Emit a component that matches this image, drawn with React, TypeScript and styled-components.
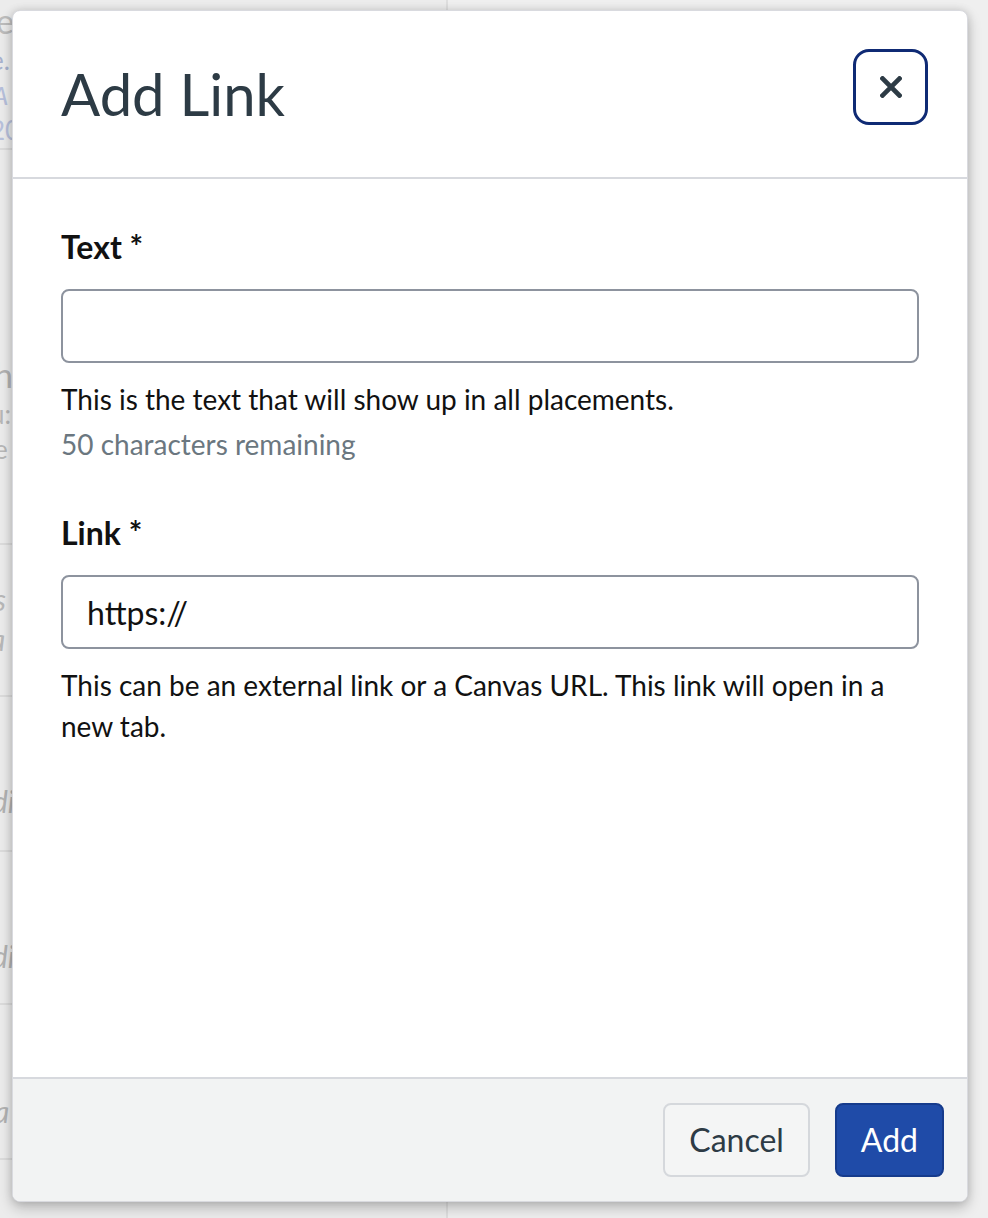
import React from "react";
import styled, { createGlobalStyle } from "styled-components";

const GlobalStyle = createGlobalStyle`
  html, body { margin: 0; padding: 0; }
  body { font-family: Lato, "Noto Sans", "Liberation Sans", sans-serif; background: #ececec; }
  *, *::before, *::after { box-sizing: border-box; }
`;

const Screen = styled.div`
  position: relative;
  width: 988px;
  height: 1218px;
  overflow: hidden;
  background: #ebebeb;
`;

/* ---------- faded page behind the modal ---------- */
const BackPage = styled.div`
  display: grid;
  grid-template-columns: 448px 1fr;
  height: 100%;
`;

const BackList = styled.div`
  display: flex;
  flex-direction: column;
  border-right: 2px solid #dedede;
  background: #ececec;
`;

const BackMain = styled.div`
  background: #efefef;
`;

const BackRow = styled.div<{ $h: number; $pad: number }>`
  height: ${(p) => p.$h}px;
  padding-top: ${(p) => p.$pad}px;
  border-bottom: 2px solid #dcdcdc;
  display: flex;
  flex-direction: column;
  gap: 4px;
  overflow: hidden;
`;

const Frag = styled.span<{ $c: string; $size: number; $italic?: boolean; $shift?: number }>`
  display: block;
  white-space: nowrap;
  margin-left: ${(p) => p.$shift ?? 0}px;
  font-size: ${(p) => p.$size}px;
  line-height: ${(p) => Math.round(p.$size * 1.2)}px;
  font-style: ${(p) => (p.$italic ? "italic" : "normal")};
  color: ${(p) => p.$c};
`;

/* ---------- modal ---------- */
const Dialog = styled.div`
  position: absolute;
  left: 12px;
  top: 10px;
  width: 956px;
  height: 1192px;
  display: flex;
  flex-direction: column;
  background: #ffffff;
  border: 1px solid #d9dadf;
  border-radius: 8px;
  box-shadow: 0 6px 14px rgba(0, 0, 0, 0.22), 0 0 8px rgba(0, 0, 0, 0.12);
  overflow: hidden;
`;

const Header = styled.header`
  position: relative;
  padding: 48px;
  border-bottom: 2px solid #d7d9de;
`;

const Title = styled.h2`
  margin: 0;
  font-size: 58px;
  line-height: 70px;
  font-weight: 400;
  color: #2d3b45;
`;

const CloseButton = styled.button`
  position: absolute;
  top: 38px;
  right: 39px;
  width: 75px;
  height: 76px;
  display: flex;
  align-items: center;
  justify-content: center;
  padding: 0;
  background: #ffffff;
  border: 3px solid #0f2a74;
  border-radius: 16px;
  cursor: pointer;
`;

const Body = styled.main`
  flex: 1;
  padding: 48px;
  display: flex;
  flex-direction: column;
  gap: 48px;
`;

const Field = styled.div`
  display: flex;
  flex-direction: column;
`;

const Label = styled.label`
  font-size: 32px;
  line-height: 40px;
  font-weight: 700;
  color: #111111;
  margin-bottom: 22px;
`;

const Input = styled.input`
  width: 100%;
  height: 74px;
  padding: 0 24px;
  border: 2px solid #8d939e;
  border-radius: 8px;
  font-family: inherit;
  font-size: 32px;
  color: #111111;
  background: #ffffff;
  outline: none;
`;

const Message = styled.div<{ $muted?: boolean; $gap: number }>`
  margin-top: ${(p) => p.$gap}px;
  font-size: 28px;
  line-height: 41px;
  color: ${(p) => (p.$muted ? "#6b7780" : "#111111")};
`;

const Footer = styled.footer`
  display: flex;
  justify-content: flex-end;
  gap: 25px;
  padding: 24px 23px 24px 24px;
  background: #f2f3f3;
  border-top: 2px solid #d7d9de;
`;

const Button = styled.button<{ $primary?: boolean }>`
  height: 74px;
  padding: 0 24px;
  font-family: inherit;
  font-size: 32px;
  line-height: 1;
  border-radius: 8px;
  cursor: pointer;
  color: ${(p) => (p.$primary ? "#ffffff" : "#2d3b45")};
  background: ${(p) => (p.$primary ? "#1f4ba8" : "#f4f5f5")};
  border: 2px solid ${(p) => (p.$primary ? "#163b8c" : "#d5d8dc")};
`;

const XIcon = () => (
  <svg width="22" height="22" viewBox="0 0 22 22" aria-hidden="true">
    <path d="M2.5 2.5 L19.5 19.5 M19.5 2.5 L2.5 19.5" stroke="#2d3b45" strokeWidth="4.6" strokeLinecap="square" fill="none" />
  </svg>
);

type FragData = { t: string; c: string; s: number; shift?: number; italic?: boolean };

const backRows: { h: number; pad: number; frags: FragData[] }[] = [
  {
    h: 150,
    pad: 0,
    frags: [
      { t: "et", c: "#bdbdbd", s: 34, shift: -4 },
      { t: "e.", c: "#a9b3cf", s: 26, shift: -10 },
      { t: "A", c: "#b7c0dc", s: 26, shift: -8, italic: true },
      { t: "20", c: "#b9c2dd", s: 26, shift: -10 },
    ],
  },
  {
    h: 395,
    pad: 204,
    frags: [
      { t: "h", c: "#b3b3b3", s: 34, shift: -6 },
      { t: "u:", c: "#b8b8b8", s: 26, shift: -10 },
      { t: "e", c: "#b8b8b8", s: 26, shift: -6 },
    ],
  },
  {
    h: 152,
    pad: 36,
    frags: [
      { t: "s", c: "#b8b8b8", s: 30, shift: -6, italic: true },
      { t: "a", c: "#b8b8b8", s: 30, shift: -10, italic: true },
    ],
  },
  { h: 155, pad: 86, frags: [{ t: "di", c: "#b3b3b3", s: 30, shift: -8, italic: true }] },
  { h: 153, pad: 86, frags: [{ t: "di", c: "#b3b3b3", s: 30, shift: -8, italic: true }] },
  { h: 155, pad: 88, frags: [{ t: "a", c: "#b3b3b3", s: 30, shift: -6, italic: true }] },
  { h: 60, pad: 0, frags: [] },
];

export default function App() {
  return (
    <>
      <GlobalStyle />
      <Screen>
        <BackPage aria-hidden="true">
          <BackList>
            {backRows.map((r, i) => (
              <BackRow key={i} $h={r.h} $pad={r.pad}>
                {r.frags.map((f, j) => (
                  <Frag key={j} $c={f.c} $size={f.s} $shift={f.shift} $italic={f.italic}>
                    {f.t}
                  </Frag>
                ))}
              </BackRow>
            ))}
          </BackList>
          <BackMain />
        </BackPage>

        <Dialog role="dialog" aria-label="Add Link">
          <Header>
            <Title>Add Link</Title>
            <CloseButton aria-label="Close">
              <XIcon />
            </CloseButton>
          </Header>

          <Body>
            <Field>
              <Label htmlFor="link-text">Text *</Label>
              <Input id="link-text" defaultValue="" />
              <Message $gap={16}>This is the text that will show up in all placements.</Message>
              <Message $gap={4} $muted>
                50 characters remaining
              </Message>
            </Field>

            <Field>
              <Label htmlFor="link-url">Link *</Label>
              <Input id="link-url" defaultValue="https://" />
              <Message $gap={16}>
                This can be an external link or a Canvas URL. This link will open in a new tab.
              </Message>
            </Field>
          </Body>

          <Footer>
            <Button>Cancel</Button>
            <Button $primary>Add</Button>
          </Footer>
        </Dialog>
      </Screen>
    </>
  );
}
